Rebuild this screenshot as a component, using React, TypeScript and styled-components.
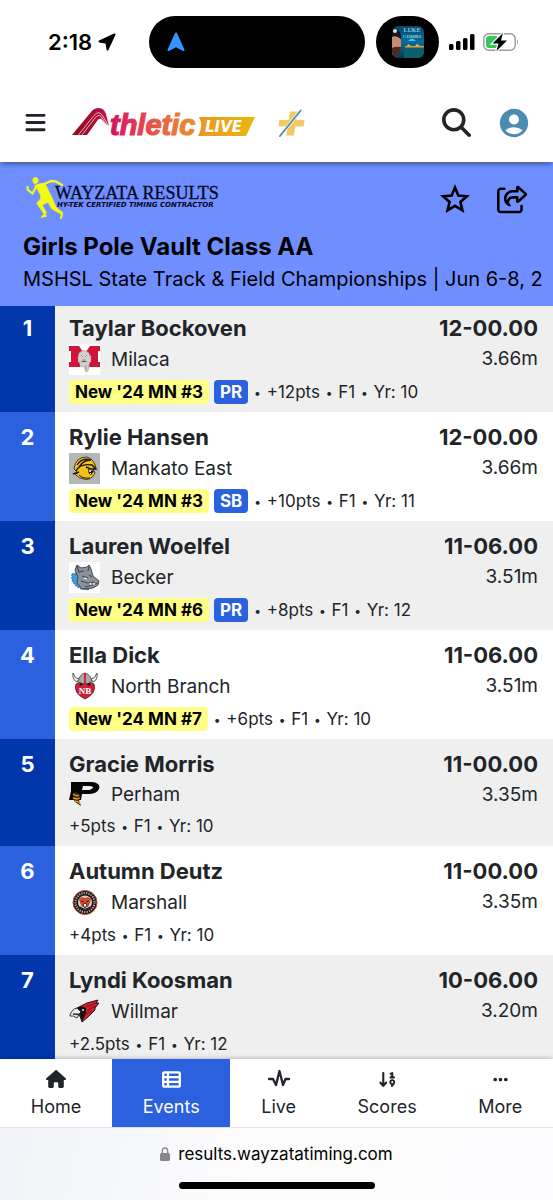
import React from "react";
import styled, { createGlobalStyle } from "styled-components";
import {
  FaArrowDown19,
  FaBars,
  FaEllipsis,
  FaHouse,
  FaMagnifyingGlass,
  FaRegShareFromSquare,
  FaTableList,
} from "react-icons/fa6";
import { MdAccountCircle } from "react-icons/md";

const ink = "#212529";
const navy = "#0236ab";
const royal = "#2b60de";

const GlobalStyle = createGlobalStyle`
  *, *::before, *::after { box-sizing: border-box; }
  body {
    margin: 0;
    background: #fff;
    color: ${ink};
    font-family: Inter, "Liberation Sans", sans-serif;
  }
  button { font: inherit; color: inherit; }
  svg { display: block; flex: none; }
`;

const Screen = styled.div`
  display: flex;
  flex-direction: column;
  height: 100vh;
`;

/* ---------- Status bar ---------- */

const StatusBar = styled.div`
  display: flex;
  align-items: center;
  gap: 10px;
  padding: 16px 34px 15px 48px;
  color: #000;
`;

const Clock = styled.div`
  display: flex;
  align-items: center;
  gap: 6px;
  font-size: 22px;
  font-weight: 600;
  line-height: 28px;
`;

const Islands = styled.div`
  display: flex;
  gap: 11px;
  margin-left: auto;
`;

const Island = styled.div<{ $wide?: boolean }>`
  display: flex;
  align-items: center;
  justify-content: ${(p) => (p.$wide ? "flex-start" : "center")};
  width: ${(p) => (p.$wide ? "216px" : "63px")};
  height: 52px;
  padding: ${(p) => (p.$wide ? "0 17px" : "0")};
  border-radius: 26px;
  background: #000;
`;

const Indicators = styled.div`
  display: flex;
  align-items: center;
  gap: 8px;
`;

/* ---------- App header ---------- */

const AppHeader = styled.header`
  position: relative;
  z-index: 1;
  display: flex;
  align-items: center;
  height: 79px;
  padding: 0 22px 0 24px;
  background: #fff;
  box-shadow: 0 3px 5px -1px rgba(0, 0, 0, 0.4);
`;

const IconButton = styled.button`
  display: flex;
  padding: 0;
  border: 0;
  background: none;
  cursor: pointer;
`;

const BrandLink = styled.a`
  display: flex;
  gap: 22px;
  margin-left: 25px;
  text-decoration: none;
`;

const HeaderActions = styled.div`
  display: flex;
  align-items: center;
  gap: 26px;
  margin-left: auto;
`;

/* ---------- Event banner ---------- */

const Banner = styled.section`
  padding: 12px 10px 11px 23px;
  background: #6f8eff;
  color: #000;
`;

const BannerTop = styled.div`
  display: flex;
  align-items: center;
  justify-content: space-between;
  height: 50px;
  margin-bottom: 7px;
  padding-right: 15px;
`;

const BannerActions = styled.div`
  display: flex;
  align-items: center;
  gap: 27px;
`;

const EventTitle = styled.h1`
  margin: 0;
  font-size: 24px;
  font-weight: 700;
  line-height: 32px;
`;

const MeetName = styled.p`
  margin: 0;
  overflow: hidden;
  font-size: 20px;
  line-height: 32px;
  white-space: nowrap;
`;

/* ---------- Results ---------- */

const Results = styled.ol`
  flex: 1;
  min-height: 0;
  margin: 0;
  padding: 0;
  overflow-y: auto;
  scrollbar-width: none;
  list-style: none;
`;

const Rank = styled.div`
  flex: none;
  width: 55px;
  padding-top: 11px;
  background: ${royal};
  color: #fff;
  font-size: 22px;
  font-weight: 700;
  line-height: 29px;
  text-align: center;
`;

const Entry = styled.div`
  flex: 1;
  min-width: 0;
  padding: 11px 0 3px 14px;
`;

const Mark = styled.div`
  padding: 11px 15px 0 0;
  text-align: right;
`;

const ResultRow = styled.li`
  display: flex;
  background: #fff;

  &:nth-child(odd) {
    background: #efefef;
  }
  &:nth-child(odd) ${Rank} {
    background: ${navy};
  }
  &:first-child ${Rank}, &:first-child ${Entry}, &:first-child ${Mark} {
    padding-top: 8px;
  }
`;

const Strong = styled.div`
  font-size: 22px;
  font-weight: 700;
  line-height: 29px;
`;

const School = styled.div<{ $short?: boolean }>`
  display: flex;
  align-items: center;
  gap: 11px;
  height: ${(p) => (p.$short ? "30px" : "32px")};
  font-size: 19px;
`;

const Metric = styled.div`
  font-size: 19px;
  line-height: 32px;
`;

const Meta = styled.div`
  display: flex;
  align-items: center;
  gap: 5px;
  height: 34px;
  font-size: 17px;
  white-space: nowrap;
`;

const Dot = styled.span`
  padding: 0 1px;
  font-size: 12px;
  line-height: 1;
  vertical-align: 1px;
`;

const Tag = styled.span<{ $blue?: boolean }>`
  padding: 0 6px;
  border-radius: 4px;
  background: ${(p) => (p.$blue ? royal : "#ffff87")};
  color: ${(p) => (p.$blue ? "#fff" : "#000")};
  font-size: 17px;
  font-weight: 700;
  line-height: 24px;
`;

/* ---------- Bottom navigation ---------- */

const TabBar = styled.nav`
  position: relative;
  display: flex;
  height: 68px;
  background: #fff;
  box-shadow: 0 0 5px rgba(0, 0, 0, 0.3);
`;

const Tab = styled.a<{ $active?: boolean }>`
  flex: 1 1 auto;
  display: flex;
  flex-direction: column;
  align-items: center;
  gap: 4px;
  padding-top: 10px;
  background: ${(p) => (p.$active ? royal : "#fff")};
  color: ${(p) => (p.$active ? "#fff" : ink)};
  font-size: 18px;
  line-height: 28px;
  text-decoration: none;
`;

const TabIcon = styled.span`
  display: flex;
  align-items: center;
  height: 20px;
`;

const BrowserBar = styled.footer`
  position: relative;
  display: flex;
  flex-direction: column;
  align-items: center;
  height: 73px;
  padding: 12px 0 11px;
  border-top: 1px solid #e4e4e8;
  background: linear-gradient(100deg, #f1f3f8 0%, #fcfcfd 45%, #fbfbfd 100%);
  color: #000;
`;

const Address = styled.div`
  display: flex;
  align-items: center;
  gap: 8px;
  font-size: 17px;
  line-height: 28px;
`;

const HomeIndicator = styled.div`
  width: 196px;
  height: 7px;
  margin-top: auto;
  border-radius: 4px;
  background: #000;
`;

/* ---------- Drawings ---------- */

const AlbumArt = () => (
  <svg width="32" height="32" viewBox="0 0 32 32" aria-hidden="true">
    <defs>
      <clipPath id="album"><rect width="32" height="32" rx="6" /></clipPath>
      <linearGradient id="night" x1="0" y1="0" x2="0" y2="1">
        <stop offset="0" stopColor="#07476b" />
        <stop offset="0.5" stopColor="#0a6d96" />
        <stop offset="1" stopColor="#083a52" />
      </linearGradient>
    </defs>
    <g clipPath="url(#album)">
      <rect width="32" height="32" fill="url(#night)" />
      <path d="M16 15 Q20 10 24 15 Z" fill="#35c9e4" />
      <path d="M13 20h19v1.500H13z" fill="#d79f3a" />
      <path d="M16 18l3 2h-4zM25 18l3 2h-5z" fill="#e6bd55" />
      <path d="M12 23l20-1v10H12z" fill="#0d5f6c" />
      <path d="M0 9 Q7 7 9 14 L9 21 Q9 26 5 28 L0 29Z" fill="#c58d70" />
      <path d="M0 2 Q7 1 9 10 L9 13 Q4 9 0 11Z" fill="#15191d" />
      <path d="M0 22 Q4 20 9 21 Q9 29 3 29 L8 32 L0 32Z" fill="#4b2a20" />
      <circle cx="3" cy="5" r="2" fill="#d9dcd8" />
      <text x="20" y="6" textAnchor="middle" fontFamily="Liberation Serif, serif" fontWeight="700" fontSize="6" fill="#8fd0e0">LUKE</text>
      <text x="20" y="12" textAnchor="middle" fontFamily="Liberation Serif, serif" fontWeight="700" fontSize="5" fill="#8fd0e0">COMBS</text>
    </g>
  </svg>
);

const Signal = () => (
  <svg width="26" height="18" viewBox="0 0 26 18" aria-hidden="true">
    <rect x="0" y="11" width="4.500" height="6" rx="1.500" />
    <rect x="7" y="8" width="4.500" height="9" rx="1.500" />
    <rect x="14" y="5" width="4.500" height="12" rx="1.500" />
    <rect x="21" y="1" width="4.500" height="16" rx="1.500" />
  </svg>
);

const Battery = () => (
  <svg width="36" height="20" viewBox="0 0 36 20" aria-hidden="true">
    <rect x="0.800" y="1.800" width="31.400" height="16.400" rx="5" fill="#fff" stroke="#9a9a9a" strokeWidth="1.400" />
    <path d="M34 7.500q2 2.500 0 5z" fill="#9a9a9a" />
    <path d="M6 4h8v12H6q-3 0-3-3V7q0-3 3-3z" fill="#34c759" />
    <path d="M20 1 9.500 11.500h6L13.500 19 24 8.500h-6z" fill="#000" stroke="#fff" strokeWidth="2.400" paintOrder="stroke" />
  </svg>
);

const AthleticLogo = () => (
  <svg width="184" height="30" viewBox="0 0 184 30" overflow="visible" role="img" aria-label="AthleticLIVE">
    <defs>
      <linearGradient id="sunset" gradientUnits="userSpaceOnUse" x1="0" y1="0" x2="184" y2="0">
        <stop offset="0" stopColor="#8d0a24" />
        <stop offset="0.150" stopColor="#b01038" />
        <stop offset="0.240" stopColor="#d81b60" />
        <stop offset="0.400" stopColor="#e5484f" />
        <stop offset="0.580" stopColor="#e77c38" />
        <stop offset="0.720" stopColor="#eb9a1e" />
        <stop offset="1" stopColor="#e8b90c" />
      </linearGradient>
    </defs>
    <path d="M0 27 L19 4 Q22 0 27 0 Q32 0 34 6 L37 18 Q33 16 30 12 Q28 9 25 13 L15 27Z" fill="url(#sunset)" />
    <path d="M6 27.500 L22 7.500 Q27 2 30.500 7.500 L36.500 18" fill="none" stroke="#fff" strokeWidth="0.700" />
    <path d="M9.500 27.500 L23.500 9.500 Q27.500 5 30 10 L35 18" fill="none" stroke="#fff" strokeWidth="0.700" />
    <text x="38" y="27" fontFamily="Liberation Sans, sans-serif" fontWeight="700" fontStyle="italic" fontSize="29" fill="url(#sunset)" stroke="url(#sunset)" strokeWidth="1.200">thletic</text>
    <path d="M127 9H183L174 28H126Q132 18 127 9Z" fill="url(#sunset)" />
    <text x="133" y="24" fontFamily="DejaVu Sans, sans-serif" fontWeight="700" fontStyle="italic" fontSize="15" fill="#fff">LIVE</text>
  </svg>
);

const PlusLogo = () => (
  <svg width="27" height="30" viewBox="0 0 28 30" role="img" aria-label="Plus">
    <path d="M12.500 3h8l-1.500 9h8.500l-1 6.500H18L16.500 28h-8L10 18.500H0.500L1.500 12H11z" fill="#f3ca62" />
    <path d="M2 28.500 23.500 2" stroke="#fff" strokeWidth="3" />
    <path d="M2 28.500 23.500 2" stroke="#4b89ad" strokeWidth="1.900" strokeLinecap="round" />
  </svg>
);

const WayzataLogo = () => (
  <svg width="200" height="46" viewBox="0 0 200 46" role="img" aria-label="Wayzata Results, Hy-Tek certified timing contractor">
    <g fill="#f4fb12" stroke="#f4fb12" strokeLinecap="round" strokeLinejoin="round">
      <ellipse cx="12.500" cy="4.500" rx="2.600" ry="3" />
      <path d="M12 9.500 Q17 7 22 7.500 L25 14 L29 22 L27 25 L18 25 Q19 19 15 14Z" strokeWidth="1" />
      <path d="M21 8 L28 5 L33 5.500 L39 9" fill="none" strokeWidth="2.400" />
      <path d="M13 11 L9.500 17.500 L5 14 L4.500 11" fill="none" strokeWidth="2.200" />
      <path d="M18 23 L25 26 L19 29 L23.500 37 L21.500 38.500 L14 27.500Z" strokeWidth="1" />
      <path d="M22 38 L19 41 L23 40" fill="none" strokeWidth="1.800" />
      <path d="M24 24 L29 22 L33 31 L40 37 L38 38 L29 33Z" strokeWidth="0.800" />
      <path d="M39 38 L38 42" fill="none" strokeWidth="2" />
    </g>
    <text x="32" y="23" fontFamily="Liberation Serif, serif" fontSize="18" fill="#05071a" stroke="#05071a" strokeWidth="0.300">WAYZATA RESULTS</text>
    <text x="34" y="31" fontFamily="DejaVu Sans, sans-serif" fontSize="7" fontStyle="italic" fontWeight="700" fill="#05071a">HY-TEK CERTIFIED TIMING CONTRACTOR</text>
  </svg>
);

const Star = () => (
  <svg width="30" height="30" viewBox="0 0 30 30" aria-hidden="true">
    <path d="M15 3.500 18.300 11.500 27 12.200 20.400 17.900 22.400 26.300 15 21.800 7.600 26.300 9.600 17.900 3 12.200 11.700 11.500Z" fill="none" stroke="currentColor" strokeWidth="2.600" />
  </svg>
);

const Pulse = () => (
  <svg width="24" height="20" viewBox="0 0 24 20" aria-hidden="true">
    <path d="M2 10h4l3 6 3.500-14 3.500 14 2.500-6H22" fill="none" stroke="currentColor" strokeWidth="2.300" strokeLinecap="round" strokeLinejoin="round" />
  </svg>
);

const Lock = () => (
  <svg width="10" height="14" viewBox="0 0 10 14" aria-hidden="true">
    <path d="M2.300 7V4Q2.300 1 5 1T7.700 4V7" fill="none" stroke="#86868b" strokeWidth="1.300" />
    <rect y="6" width="10" height="8" rx="1.500" fill="#86868b" />
  </svg>
);

const crests: Record<string, React.ReactNode> = {
  Milaca: (
    <>
      <path d="M0 0h31v31H0z" fill="#fff" />
      <path d="M0 2H10L15.500 10L21 2H31V7H29V18H31V23H20V18H22V11L15.500 21L9 11V18H11V23H0V18H2V7H0Z" fill="#d3143a" />
      <path d="M10 9q5-5 10 0l2 6-2 6-1 6-2 1-2-6-3 1-2-5-1-4z" fill="#d3d1cf" stroke="#9b9694" strokeWidth="0.600" />
      <path d="M12 11l2 2M18 11l-2 2M13 16h4M12 18l3-1 3 1M17 21v5" stroke="#7d7876" strokeWidth="0.700" />
    </>
  ),
  "Mankato East": (
    <>
      <path d="M0 0h31v31H0z" fill="#b5b6b6" />
      <path d="M5 16Q6 4 18 4Q25 6 27 15L24 16L26 20Q22 28 15 26Q10 26 6 21L9 20Z" fill="#f3c217" stroke="#1c1a14" strokeWidth="0.800" />
      <path d="M8 12Q13 4 22 7Q14 7 10 14M7 18Q11 10 23 12L27 16L22 16L17 14M4 21L10 19" fill="none" stroke="#1c1a14" strokeWidth="1.400" />
      <path d="M10 22Q14 26 21 25" fill="none" stroke="#1c1a14" strokeWidth="1" />
      <path d="M19 16l6 2-3 4q-3-1-3-6z" fill="#111" />
      <path d="M20 17l1 2 1-2M21 21l1-1" stroke="#fff" strokeWidth="1" fill="none" />
    </>
  ),
  Becker: (
    <>
      <path d="M0 0h31v31H0z" fill="#fff" />
      <path d="M3 12Q1 22 12 27L20 28L15 21L7 11Z" fill="#3d9bdb" stroke="#1c5788" strokeWidth="0.800" strokeDasharray="2 1" />
      <path d="M6 8L8 3L12 6L18 5L20 3L22 7L24 14L30 19L29 23L24 26L13 27L8 21L9 15Z" fill="#8b929c" stroke="#454b55" strokeWidth="1" />
      <path d="M8 4l2 6 5-1M20 4l-1 5M13 14l6 2M20 13l3 2M12 19l6 2 8-1M16 25l8-2 5-2" fill="none" stroke="#454b55" strokeWidth="1.200" />
      <path d="M15 16l3 1M21 21l1 2M25 21v2" stroke="#fff" strokeWidth="1.300" />
    </>
  ),
  "North Branch": (
    <>
      <path d="M7 13Q16 8 25 13Q28 22 16 28Q4 22 7 13Z" fill="#d21f36" stroke="#4a1b22" strokeWidth="0.800" />
      <path d="M9 12Q10 3 16 2Q22 3 23 12L20 15L16 11L12 15Z" fill="#aba6a5" stroke="#4e4747" strokeWidth="0.800" />
      <path d="M8 11Q3 9 4 2Q6 8 10 8ZM24 11Q29 9 28 2Q26 8 22 8Z" fill="#f3ede4" stroke="#4e4747" strokeWidth="0.900" />
      <path d="M16 2v12" stroke="#d21f36" strokeWidth="1.800" />
      <path d="M10 11l5 2-4 2zM22 11l-5 2 4 2z" fill="#1c1516" />
      <text x="16" y="23" textAnchor="middle" fontFamily="Liberation Serif, serif" fontSize="9" fontWeight="700" fill="#fff">NB</text>
    </>
  ),
  Perham: (
    <>
      <path fillRule="evenodd" d="M2 0H23Q32 1 30 7Q28 12 19 12H13L12 18H0L2 9ZM14 4L13 8H20Q24 7 24 5Q23 4 20 4Z" fill="#050505" />
      <path d="M4 12q2-3 5-1l2 3-1 4 2 6-6-4-2-3z" fill="#3b2711" />
      <path d="M4 12l4 2 2-1M4 16l4 1 3-1M6 19l4 1 1 2" fill="none" stroke="#e89a25" strokeWidth="1.300" />
    </>
  ),
  Marshall: (
    <>
      <circle cx="16" cy="15.500" r="12" fill="#1b1716" stroke="#c5492f" strokeWidth="1" />
      <circle cx="16" cy="15.500" r="9.500" fill="none" stroke="#b9b4af" strokeWidth="2" strokeDasharray="1.200 1.200" />
      <circle cx="16" cy="15.500" r="7" fill="#d8d2cd" />
      <path d="M10 12l3-2 3 1 3-1 3 2-1 4-2 4h-6l-2-4z" fill="#d9472b" />
      <path d="M12 14l3 1M20 14l-3 1M14 18l2-2 2 2-2 3z" stroke="#211d1c" fill="#fff" strokeWidth="0.900" />
      <path d="M11 20q5 4 10 0" fill="none" stroke="#211d1c" strokeWidth="1.200" />
    </>
  ),
  Willmar: (
    <>
      <path d="M8 12L18 7L29 4L27 7L30 7L26 12L26 14L20 20L13 26L11 20L6 17Z" fill="#da1f2c" stroke="#251013" strokeWidth="1" />
      <path d="M8 12Q13 9 17 12L17 18L13 25L11 19Z" fill="#111" />
      <path d="M17 11L27 7M18 15L26 10M17 18L23 15" stroke="#7d121b" strokeWidth="1.100" />
      <path d="M1 19Q3 13 8 12L12 16L10 18L4 18L10 19L8 22Q4 19 1 20Z" fill="#ececec" stroke="#222" strokeWidth="0.900" />
      <circle cx="14" cy="14" r="0.900" fill="#fff" />
    </>
  ),
};

const Crest = ({ school }: { school: string }) => {
  const height = school === "Perham" ? 24 : 31;
  return (
    <svg width="31" height={height} viewBox={`0 0 31 ${height}`} role="img" aria-label={`${school} crest`}>
      {crests[school]}
    </svg>
  );
};

/* ---------- Data ---------- */

type Result = {
  name: string;
  school: string;
  mark: string;
  metres: string;
  rank?: string;
  best?: string;
  points: string;
  year: string;
};

const results: Result[] = [
  { name: "Taylar Bockoven", school: "Milaca", mark: "12-00.00", metres: "3.66m", rank: "#3", best: "PR", points: "12", year: "10" },
  { name: "Rylie Hansen", school: "Mankato East", mark: "12-00.00", metres: "3.66m", rank: "#3", best: "SB", points: "10", year: "11" },
  { name: "Lauren Woelfel", school: "Becker", mark: "11-06.00", metres: "3.51m", rank: "#6", best: "PR", points: "8", year: "12" },
  { name: "Ella Dick", school: "North Branch", mark: "11-06.00", metres: "3.51m", rank: "#7", points: "6", year: "10" },
  { name: "Gracie Morris", school: "Perham", mark: "11-00.00", metres: "3.35m", points: "5", year: "10" },
  { name: "Autumn Deutz", school: "Marshall", mark: "11-00.00", metres: "3.35m", points: "4", year: "10" },
  { name: "Lyndi Koosman", school: "Willmar", mark: "10-06.00", metres: "3.20m", points: "2.5", year: "12" },
];

const tabs = [
  { label: "Home", icon: <FaHouse size={20} /> },
  { label: "Events", icon: <FaTableList size={19} /> },
  { label: "Live", icon: <Pulse /> },
  { label: "Scores", icon: <FaArrowDown19 size={19} /> },
  { label: "More", icon: <FaEllipsis size={17} /> },
];

export default function App() {
  return (
    <Screen>
      <GlobalStyle />
      <StatusBar>
        <Clock>
          2:18
          <svg width="18" height="18" viewBox="0 0 18 18" aria-hidden="true">
            <path d="M1.500 8.500 16.500 1.500 9.500 16.500 8.500 9.800z" stroke="#000" strokeWidth="2" strokeLinejoin="round" />
          </svg>
        </Clock>
        <Islands>
          <Island $wide>
            <svg width="20" height="20" viewBox="0 0 20 20" aria-hidden="true">
              <path d="M10 1.500 17.500 18 10 14 2.500 18z" fill="#3395ff" stroke="#3395ff" strokeWidth="2" strokeLinejoin="round" />
            </svg>
          </Island>
          <Island><AlbumArt /></Island>
        </Islands>
        <Indicators>
          <Signal />
          <Battery />
        </Indicators>
      </StatusBar>

      <AppHeader>
        <IconButton aria-label="Menu"><FaBars size={23} /></IconButton>
        <BrandLink href="#home">
          <AthleticLogo />
          <PlusLogo />
        </BrandLink>
        <HeaderActions>
          <IconButton aria-label="Search"><FaMagnifyingGlass size={29} /></IconButton>
          <IconButton aria-label="Account"><MdAccountCircle size={34} color="#4d8bb0" /></IconButton>
        </HeaderActions>
      </AppHeader>

      <Banner>
        <BannerTop>
          <WayzataLogo />
          <BannerActions>
            <IconButton aria-label="Favorite"><Star /></IconButton>
            <IconButton aria-label="Share"><FaRegShareFromSquare size={31} /></IconButton>
          </BannerActions>
        </BannerTop>
        <EventTitle>Girls Pole Vault Class AA</EventTitle>
        <MeetName>MSHSL State Track &amp; Field Championships | Jun 6-8, 2024</MeetName>
      </Banner>

      <Results>
        {results.map((r, i) => (
          <ResultRow key={r.name}>
            <Rank>{i + 1}</Rank>
            <Entry>
              <Strong>{r.name}</Strong>
              <School $short={r.school === "Perham"}>
                <Crest school={r.school} />
                {r.school}
              </School>
              <Meta>
                {r.rank && <Tag>New '24 MN {r.rank}</Tag>}
                {r.best && <Tag $blue>{r.best}</Tag>}
                <span>
                  {r.rank && <><Dot>•</Dot> </>}
                  +{r.points}pts <Dot>•</Dot> F1 <Dot>•</Dot> Yr: {r.year}
                </span>
              </Meta>
            </Entry>
            <Mark>
              <Strong>{r.mark}</Strong>
              <Metric>{r.metres}</Metric>
            </Mark>
          </ResultRow>
        ))}
      </Results>

      <TabBar>
        {tabs.map((t) => (
          <Tab key={t.label} href={`#${t.label.toLowerCase()}`} $active={t.label === "Events"}>
            <TabIcon>{t.icon}</TabIcon>
            {t.label}
          </Tab>
        ))}
      </TabBar>
      <BrowserBar>
        <Address><Lock />results.wayzatatiming.com</Address>
        <HomeIndicator />
      </BrowserBar>
    </Screen>
  );
}
